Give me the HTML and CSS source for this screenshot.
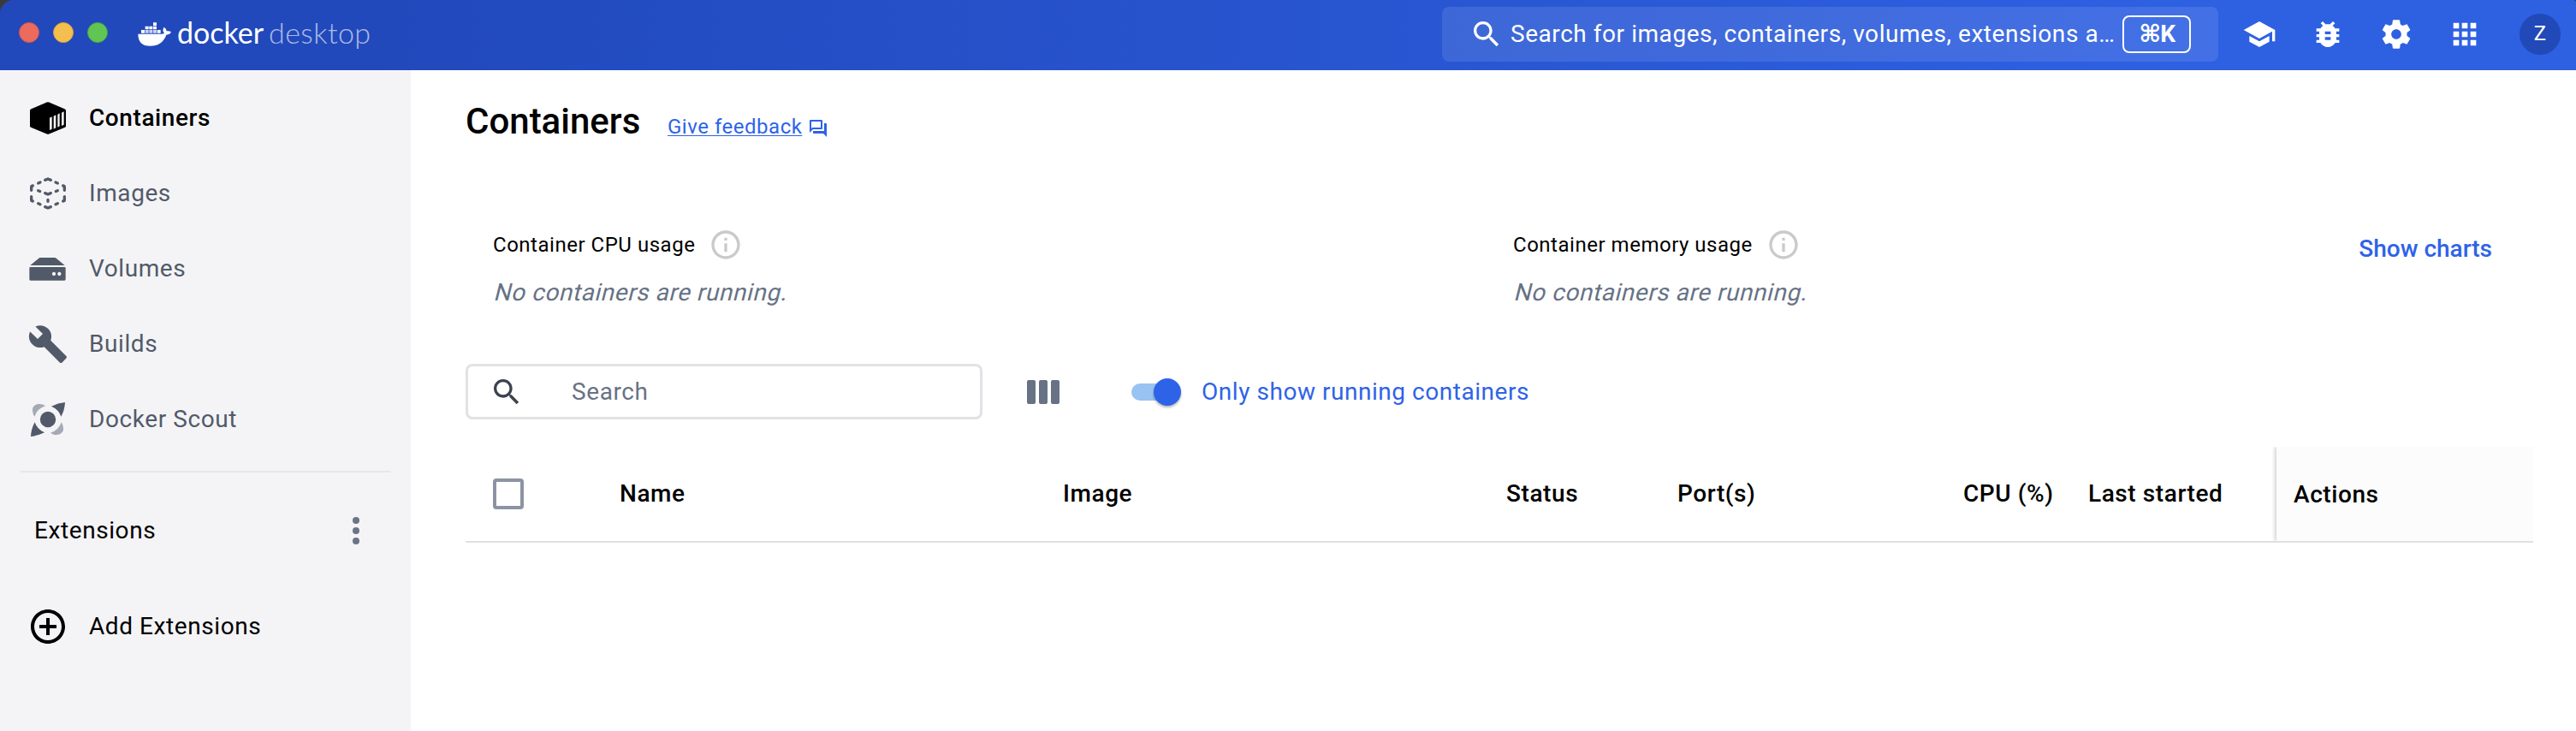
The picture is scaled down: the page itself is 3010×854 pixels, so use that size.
FILE: index.html
```
<!DOCTYPE html>
<html lang="en">
<head>
<meta charset="utf-8">
<title>Docker Desktop</title>
<link rel="stylesheet" href="styles.css">
</head>
<body>
<div class="window">
  <header class="titlebar">
    <div class="lights">
      <span class="light light-close"></span>
      <span class="light light-min"></span>
      <span class="light light-max"></span>
    </div>
    <div class="brand">
      <svg class="whale" viewBox="480 70 123 93" fill="#fff">
        <path d="M537 77h12v11h-12zM509 90h12v11h-12zM523 90h12v11h-12zM537 90h12v11h-12zM495 103h12v11h-12zM551 103h12v11h-12z"/>
        <path opacity=".75" d="M509 103h12v11h-12zM523 103h12v11h-12zM537 103h12v11h-12z"/>
        <path d="M484 117h82q7 0 10-3q-9-9-1-21q8 5 9 14q9-2 16 3q-4 10-17 10q-14 39-57 39q-42 0-42-42z"/>
      </svg>
      <span class="brand-name">docker</span>
      <span class="brand-sub">desktop</span>
    </div>
    <div class="global-search">
      <svg class="icon40" viewBox="0 0 24 24"><path d="M15.5 14h-.79l-.28-.27C15.41 12.59 16 11.11 16 9.5 16 5.91 13.09 3 9.5 3S3 5.91 3 9.5 5.91 16 9.5 16c1.61 0 3.09-.59 4.23-1.57l.27.28v.79l5 4.99L20.49 19l-4.99-5zm-6 0C7.01 14 5 11.99 5 9.5S7.01 5 9.5 5 14 7.01 14 9.5 11.99 14 9.5 14z"/></svg>
      <span class="global-search-text">Search for images, containers, volumes, extensions a…</span>
      <kbd class="shortcut">⌘K</kbd>
    </div>
    <nav class="actions">
      <svg class="icon40" viewBox="0 0 24 24"><path d="M5 13.18v4L12 21l7-3.82v-4L12 17l-7-3.82zM12 3 1 9l11 6 9-4.91V17h2V9L12 3z"/></svg>
      <svg class="icon40" viewBox="0 0 24 24"><path d="M20 8h-2.81c-.45-.78-1.07-1.45-1.82-1.96L17 4.41 15.59 3l-2.17 2.17C12.96 5.06 12.49 5 12 5c-.49 0-.96.06-1.41.17L8.41 3 7 4.41l1.62 1.63C7.88 6.55 7.26 7.22 6.81 8H4v2h2.09c-.05.33-.09.66-.09 1v1H4v2h2v1c0 .34.04.67.09 1H4v2h2.81c1.04 1.79 2.97 3 5.19 3s4.15-1.21 5.19-3H20v-2h-2.09c.05-.33.09-.66.09-1v-1h2v-2h-2v-1c0-.34-.04-.67-.09-1H20V8zm-6 8h-4v-2h4v2zm0-4h-4v-2h4v2z"/></svg>
      <svg class="icon40" viewBox="0 0 24 24"><path d="M19.43 12.98c.04-.32.07-.64.07-.98s-.03-.66-.07-.98l2.11-1.65c.19-.15.24-.42.12-.64l-2-3.46c-.12-.22-.39-.3-.61-.22l-2.49 1c-.52-.4-1.08-.73-1.69-.98l-.38-2.65C14.46 2.18 14.25 2 14 2h-4c-.25 0-.46.18-.49.42l-.38 2.65c-.61.25-1.17.59-1.69.98l-2.49-1c-.23-.09-.49 0-.61.22l-2 3.46c-.13.22-.07.49.12.64l2.11 1.65c-.04.32-.07.65-.07.98s.03.66.07.98l-2.11 1.65c-.19.15-.24.42-.12.64l2 3.46c.12.22.39.3.61.22l2.49-1c.52.4 1.08.73 1.69.98l.38 2.65c.03.24.24.42.49.42h4c.25 0 .46-.18.49-.42l.38-2.65c.61-.25 1.17-.59 1.69-.98l2.49 1c.23.09.49 0 .61-.22l2-3.46c.12-.22.07-.49-.12-.64l-2.11-1.65zM12 15.5c-1.93 0-3.5-1.57-3.5-3.5s1.57-3.5 3.5-3.5 3.5 1.57 3.5 3.5-1.57 3.5-3.5 3.5z"/></svg>
      <svg class="icon40" viewBox="0 0 24 24"><path d="M4 8h4V4H4v4zm6 12h4v-4h-4v4zm-6 0h4v-4H4v4zm0-6h4v-4H4v4zm6 0h4v-4h-4v4zm6-10v4h4V4h-4zm-6 4h4V4h-4v4zm6 6h4v-4h-4v4zm0 6h4v-4h-4v4z"/></svg>
    </nav>
    <span class="avatar">Z</span>
  </header>

  <div class="body">
    <aside class="sidebar">
      <a class="item item-active">
        <svg class="icon48" viewBox="96 72 144 144"><path d="M164 88.500q4-2 8 0l56 24q3 1.500 3 5v54q0 3.500-3 5l-56 23q-4 2-8 0l-56-23q-3-1.500-3-5v-54q0-3.500 3-5z"/><path fill="#f4f4f6" d="M174 143l8-4v43l-8 4zM188 137l8-4v45l-8 4zM202 131l7-4v45l-7 4zM216 125l8-4v46l-8 4z"/></svg>
        <span>Containers</span>
      </a>
      <a class="item">
        <svg class="icon48 stroked" viewBox="96 336 144 144"><path d="M158 361l10-4 10 4M134 372l7-3M202 372l-7-3M110 397v-12q0-3 5-4M226 397v-12q0-3-5-4M110 419v12q0 3 5 4M226 419v12q0 3-5 4M158 455l10 4 10-4M134 443l7 3M202 443l-7 3M134 398l6 2.500M202 398l-6 2.500M158 407l10 4 10-4M168 430v6"/></svg>
        <span>Images</span>
      </a>
      <a class="item">
        <svg class="icon48" viewBox="96 600 144 144"><path d="M140 633h52q3 0 5 2l30 25H106l30-25q2-2 4-2z"/><path fill-rule="evenodd" d="M107 666h119q4 0 4 4v39q0 4-4 4H107q-4 0-4-4v-39q0-4 4-4zM189 683.500a6.500 6.500 0 1 0 .01 0zM208 683.500a6.500 6.500 0 1 0 .01 0z"/></svg>
        <span>Volumes</span>
      </a>
      <a class="item">
        <svg class="icon48" viewBox="0 0 24 24"><path d="M22.700 19l-9.100-9.100c.9-2.300.4-5-1.500-6.900-2-2-5-2.400-7.400-1.300L9 6 6 9 1.600 4.700C.4 7.100.9 10.100 2.900 12.100c1.900 1.900 4.600 2.400 6.900 1.500l9.100 9.100c.4.4 1 .4 1.400 0l2.300-2.300c.5-.4.5-1.100.1-1.400z"/></svg>
        <span>Builds</span>
      </a>
      <a class="item">
        <svg class="icon48" viewBox="96 378 144 144"><circle cx="168" cy="450" r="27.500"/><path d="M228 390Q203 392 180 404Q206 415 214 440Q227 417 228 390zM108 510Q133 508 156 496Q130 485 122 460Q109 483 108 510z"/><path fill="#a5a9b5" d="M159 403C140 389 112 397 114 419Q115 431 121 440Q129 413 159 403zM177 497C196 511 224 503 222 481Q221 469 215 460Q207 487 177 497z"/></svg>
        <span>Docker Scout</span>
      </a>
      <hr class="divider">
      <div class="section">
        <span>Extensions</span>
        <svg class="dots" viewBox="0 0 8 32"><circle cx="4" cy="4" r="4"/><circle cx="4" cy="16" r="4"/><circle cx="4" cy="28" r="4"/></svg>
      </div>
      <a class="item item-add">
        <svg class="icon48" viewBox="0 0 24 24"><path d="M13 7h-2v4H7v2h4v4h2v-4h4v-2h-4V7zm-1-5C6.480 2 2 6.480 2 12s4.480 10 10 10 10-4.480 10-10S17.520 2 12 2zm0 18c-4.410 0-8-3.590-8-8s3.590-8 8-8 8 3.590 8 8-3.590 8-8 8z"/></svg>
        <span>Add Extensions</span>
      </a>
    </aside>

    <main class="main">
      <div class="heading">
        <h1 class="title">Containers</h1>
        <a class="feedback">Give feedback</a>
        <svg class="feedback-icon" viewBox="0 0 24 24"><path d="M15 4v7H5.170L4 12.170V4h11m1-2H3c-.55 0-1 .45-1 1v14l4-4h10c.55 0 1-.45 1-1V3c0-.55-.45-1-1-1zm5 4h-2v9H6v2c0 .55.45 1 1 1h11l4 4V7c0-.55-.45-1-1-1z"/></svg>
      </div>

      <div class="stats">
        <section class="stat">
          <div class="stat-label">
            <span>Container CPU usage</span>
            <svg class="icon40 info" viewBox="0 0 24 24"><path d="M11 7h2v2h-2zm0 4h2v6h-2zm1-9C6.480 2 2 6.480 2 12s4.480 10 10 10 10-4.480 10-10S17.520 2 12 2zm0 18c-4.410 0-8-3.590-8-8s3.590-8 8-8 8 3.590 8 8-3.590 8-8 8z"/></svg>
          </div>
          <p class="stat-empty">No containers are running.</p>
        </section>
        <section class="stat">
          <div class="stat-label">
            <span>Container memory usage</span>
            <svg class="icon40 info" viewBox="0 0 24 24"><path d="M11 7h2v2h-2zm0 4h2v6h-2zm1-9C6.480 2 2 6.480 2 12s4.480 10 10 10 10-4.480 10-10S17.520 2 12 2zm0 18c-4.410 0-8-3.590-8-8s3.590-8 8-8 8 3.590 8 8-3.590 8-8 8z"/></svg>
          </div>
          <p class="stat-empty">No containers are running.</p>
        </section>
        <a class="show-charts">Show charts</a>
      </div>

      <div class="toolbar">
        <div class="search">
          <svg class="icon40" viewBox="0 0 24 24"><path d="M15.500 14h-.79l-.28-.27C15.410 12.590 16 11.110 16 9.500 16 5.910 13.090 3 9.500 3S3 5.910 3 9.500 5.910 16 9.500 16c1.610 0 3.090-.59 4.230-1.570l.27.28v.79l5 4.990L20.490 19l-4.990-5zm-6 0C7.010 14 5 11.990 5 9.500S7.010 5 9.500 5 14 7.010 14 9.500 11.990 14 9.500 14z"/></svg>
          <span>Search</span>
        </div>
        <svg class="columns" viewBox="0 0 38 28"><rect width="10" height="28" rx="2"/><rect x="14" width="10" height="28" rx="2"/><rect x="28" width="10" height="28" rx="2"/></svg>
        <span class="toggle"><span class="thumb"></span></span>
        <span class="toggle-label">Only show running containers</span>
      </div>

      <div class="table-head">
        <span class="cell cell-check"><span class="checkbox"></span></span>
        <span class="cell">Name</span>
        <span class="cell">Image</span>
        <span class="cell">Status</span>
        <span class="cell">Port(s)</span>
        <span class="cell">CPU (%)</span>
        <span class="cell">Last started</span>
        <span class="cell cell-actions">Actions</span>
      </div>
    </main>
  </div>
</div>
</body>
</html>
```

FILE: styles.css
```
* { box-sizing: border-box; }

body {
  margin: 0;
  background: #3a3a3c;
  color: #000;
  font: 28px/40px Roboto, sans-serif;
  letter-spacing: 0.58px;
}

svg { display: block; flex: none; fill: currentColor; }
.icon40 { width: 40px; height: 40px; }
.icon48 { width: 48px; height: 48px; }

.window {
  display: flex;
  flex-direction: column;
  width: 3010px;
  height: 854px;
  overflow: hidden;
  border-radius: 16px 3px 0 0;
}

/* Title bar */
.titlebar {
  display: flex;
  align-items: center;
  flex: none;
  height: 82px;
  padding: 0 18px 2px 22px;
  background: linear-gradient(90deg, #2149bc 0%, #2149bc 15%, #2e60e2 85%, #2e60e2 100%);
  color: #fff;
}
.lights { display: flex; gap: 16px; margin-top: -4px; }
.light {
  width: 24px;
  height: 24px;
  border-radius: 50%;
  border: 1px solid;
}
.light-close { background: #ed6a5e; border-color: #d5544a; }
.light-min { background: #f5bf4f; border-color: #d8a13c; }
.light-max { background: #61c554; border-color: #4ba73f; }

.brand {
  display: flex;
  align-items: center;
  margin-left: 34px;
  font: 34px/40px Lato, sans-serif;
  letter-spacing: 0;
}
.whale { width: 41px; height: 31px; margin-top: -2px; }
.brand-name { width: 107px; margin-left: 6px; margin-top: -5px; }
.brand-sub { font-weight: 300; letter-spacing: 0.45px; margin-top: -5px; opacity: 0.62; }

.global-search {
  display: flex;
  align-items: center;
  width: 907px;
  height: 64px;
  margin-left: auto;
  padding: 0 32px;
  border-radius: 8px;
  background: rgba(255, 255, 255, 0.1);
}
.global-search-text { width: 716px; margin-left: 8px; white-space: nowrap; letter-spacing: 0.55px; }
.shortcut {
  width: 80px;
  height: 44px;
  border: 2px solid #fff;
  border-radius: 8px;
  font: bold 28px/40px Roboto, "DejaVu Sans", sans-serif;
  letter-spacing: -1px;
  text-align: center;
}
.actions { display: flex; gap: 40px; margin-left: 28px; }
.avatar {
  width: 48px;
  height: 48px;
  margin-left: 44px;
  border-radius: 50%;
  background: #2149b8;
  font-size: 24px;
  line-height: 47px;
  letter-spacing: 0;
  text-align: center;
}

.body { display: flex; flex: 1; background: #fff; }

/* Sidebar */
.sidebar {
  display: flex;
  flex-direction: column;
  flex: none;
  width: 480px;
  padding-top: 12px;
  background: #f4f4f6;
}
.item {
  display: flex;
  align-items: center;
  gap: 24px;
  height: 88px;
  padding-left: 32px;
  color: #525a69;
}
.item-active { color: #000; font-weight: 500; }
.item-add { margin-top: 44px; color: #000; }
.stroked { fill: none; stroke: currentColor; stroke-width: 10; stroke-linecap: round; stroke-linejoin: round; }
.divider { width: 432px; height: 2px; margin: 16px 24px 0; border: 0; background: #e6e6e9; }
.section {
  display: flex;
  align-items: center;
  justify-content: space-between;
  height: 48px;
  margin-top: 44px;
  padding: 0 60px 0 40px;
}
.dots { width: 8px; height: 32px; color: #6b7487; }

/* Main */
.main { flex: 1; padding: 36px 50px 0 64px; }
.heading { display: flex; align-items: baseline; height: 48px; }
.title { width: 204px; margin: 0; font-size: 42px; line-height: 48px; font-weight: 500; letter-spacing: 0; }
.feedback {
  margin-left: 32px;
  color: #2e63e8;
  font-size: 24px;
  letter-spacing: 0.52px;
  text-decoration: underline;
  text-decoration-thickness: 1px;
  text-underline-offset: 2px;
}
.feedback-icon { align-self: center; width: 24px; height: 24px; margin: 16px 0 0 7px; color: #2e63e8; }

.stats { display: flex; margin-top: 100px; padding-left: 32px; }
.stat { width: 1192px; }
.stat:nth-child(2) { width: 900px; }
.stat-label { display: flex; align-items: center; gap: 16px; font-size: 24px; letter-spacing: 0.52px; }
.info { color: #cacaca; }
.stat-empty {
  width: 350px;
  margin: 16px 0 0;
  color: #677285;
  letter-spacing: 0.54px;
  transform: skewX(-14deg);
  transform-origin: 0 30px;
}
.show-charts {
  margin: 1px 48px 0 auto;
  color: #2e63e8;
  font-weight: 500;
  line-height: 48px;
  letter-spacing: 0;
}

.toolbar { display: flex; align-items: center; height: 65px; margin-top: 63px; }
.search {
  display: flex;
  align-items: center;
  gap: 56px;
  width: 604px;
  height: 65px;
  padding-left: 25px;
  border: 3px solid #e1e2e6;
  border-radius: 8px;
  color: #677285;
}
.search svg { color: #3c424d; }
.columns { width: 38px; height: 28px; margin-left: 52px; color: #677285; }
.toggle {
  display: flex;
  align-items: center;
  justify-content: flex-end;
  width: 58px;
  height: 20px;
  margin-left: 84px;
  border-radius: 10px;
  background: linear-gradient(90deg, #99c3f2 48px, transparent 48px);
}
.thumb {
  width: 32px;
  height: 32px;
  border-radius: 50%;
  background: #2e63e8;
  box-shadow: 0 2px 3px rgba(0, 0, 0, 0.3);
}
.toggle-label { margin-left: 24px; color: #2e63e8; letter-spacing: 0.54px; }

.table-head {
  display: grid;
  grid-template-columns: 180px 518px 518px 200px 334px 146px 220px 300px;
  height: 112px;
  margin-top: 32px;
  border-bottom: 2px solid #e0e0e0;
  font-weight: 500;
}
.cell { display: flex; align-items: center; white-space: nowrap; }
.cell-check { padding-left: 32px; }
.checkbox { width: 36px; height: 36px; border: 4px solid #8c93a3; border-radius: 4px; }
.cell-actions {
  padding: 2px 0 0 20px;
  background: #fcfcfc;
  box-shadow: -2px 0 4px rgba(0, 0, 0, 0.18);
  clip-path: inset(0 0 0 -10px);
}
```
